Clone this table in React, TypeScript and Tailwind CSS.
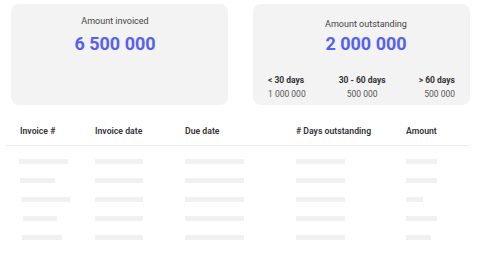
import React from 'react';

// skeleton widths per row for each column (px)
const rows: number[][] = [
  [49, 48, 59, 49, 31],
  [35, 48, 59, 49, 31],
  [49, 48, 59, 49, 17],
  [34, 48, 59, 49, 31],
  [40, 48, 59, 49, 25],
];

const firstColOffset = [13, 14, 15, 17, 16];

const buckets = [
  { label: '< 30 days', value: '1 000 000', align: 'items-start' },
  { label: '30 - 60 days', value: '500 000', align: 'items-center' },
  { label: '> 60 days', value: '500 000', align: 'items-end' },
];

const Bar: React.FC<{ w: number }> = ({ w }) => (
  <div className="h-[5px] bg-[#f1f1f1]" style={{ width: w }} />
);

export default function App() {
  return (
    <div className="w-[486px] h-[254px] bg-white font-['Roboto',sans-serif] overflow-hidden">
      <div className="flex gap-[25px] pl-[11px] pt-[4px]">
        <div className="w-[217px] h-[101px] rounded-[8px] bg-[#f3f3f3] flex flex-col items-center pt-[12px] pr-[9px]">
          <div className="text-[9px] leading-[11px] text-[#444]">Amount invoiced</div>
          <div className="mt-[6px] text-[18px] leading-[21px] font-bold text-[#5660f2]">6 500 000</div>
        </div>
        <div className="w-[217px] h-[101px] rounded-[8px] bg-[#f3f3f3] flex flex-col pt-[15px]">
          <div className="flex flex-col items-center pl-[9px]">
            <div className="text-[9px] leading-[11px] text-[#444]">Amount outstanding</div>
            <div className="mt-[3px] text-[18px] leading-[21px] font-bold text-[#5660f2]">2 000 000</div>
          </div>
          <div className="mt-[21px] w-full flex justify-between px-[15px]">
            {buckets.map((b) => (
              <div key={b.label} className={`flex flex-col ${b.align}`}>
                <div className="text-[8.5px] leading-[10px] font-bold text-[#333]">{b.label}</div>
                <div className="mt-[4px] text-[8.5px] leading-[10px] text-[#555]">{b.value}</div>
              </div>
            ))}
          </div>
        </div>
      </div>

      <div className="mt-[20px] mx-[6px] w-[463px]">
        <div className="flex h-[14px] items-center text-[8.7px] font-semibold text-[#333] border-b border-[#ebebeb] pb-[6px] box-content">
          <div className="w-[89px] pl-[14px]">Invoice #</div>
          <div className="w-[90px]">Invoice date</div>
          <div className="w-[111px]">Due date</div>
          <div className="w-[110px]">&#35; Days outstanding</div>
          <div>Amount</div>
        </div>
        <div className="flex flex-col gap-[14px] pt-[13px]">
          {rows.map((r, i) => (
            <div key={i} className="flex items-center">
              <div className="w-[89px]" style={{ paddingLeft: firstColOffset[i] }}>
                <Bar w={r[0]} />
              </div>
              <div className="w-[90px]"><Bar w={r[1]} /></div>
              <div className="w-[111px]"><Bar w={r[2]} /></div>
              <div className="w-[110px]"><Bar w={r[3]} /></div>
              <div><Bar w={r[4]} /></div>
            </div>
          ))}
        </div>
      </div>
    </div>
  );
}
